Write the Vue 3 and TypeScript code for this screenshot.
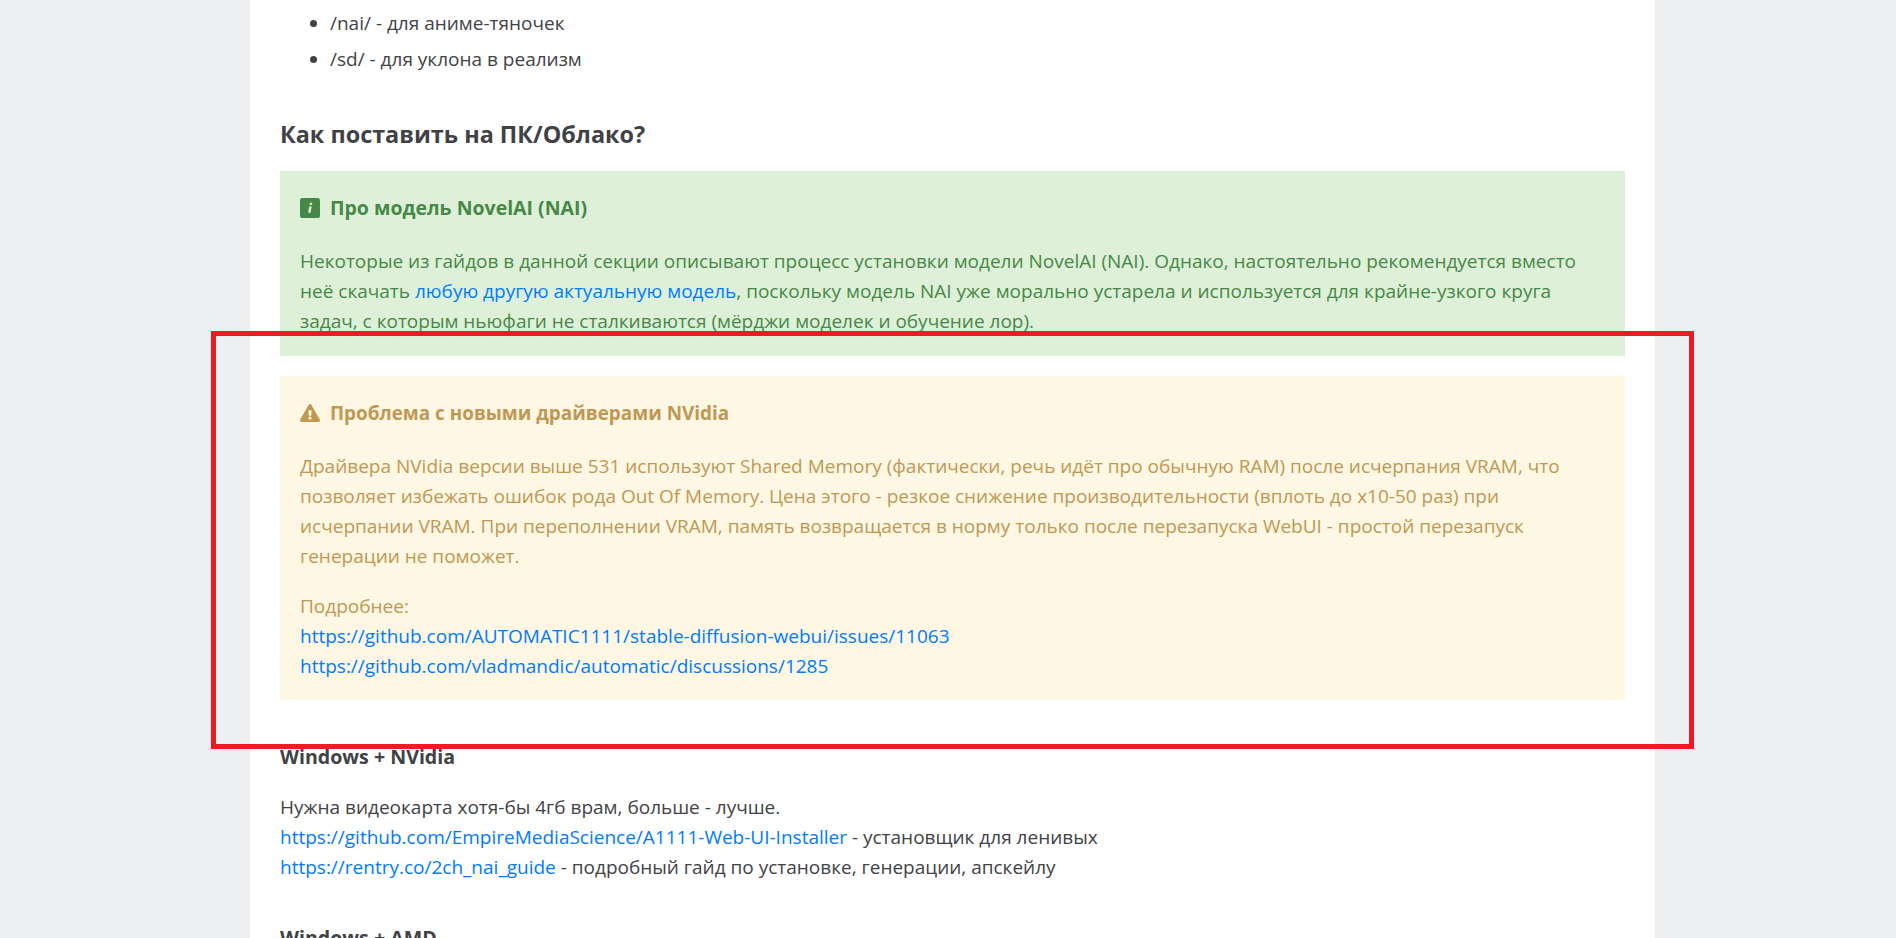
<script setup lang="ts">
interface Link { href: string; text: string }
const issues: Link[] = [
  { href: '#a', text: 'https://github.com/AUTOMATIC1111/stable-diffusion-webui/issues/11063' },
  { href: '#b', text: 'https://github.com/vladmandic/automatic/discussions/1285' },
]
</script>

<template>
  <div class="page">
    <main class="sheet">
      <ul class="list">
        <li>/nai/ - для аниме-тяночек</li>
        <li>/sd/ - для уклона в реализм</li>
      </ul>

      <h2 class="heading">Как поставить на ПК/Облако?</h2>

      <section class="callout success">
        <h4 class="callout-title">
          <svg class="icon" viewBox="0 0 20 20" aria-hidden="true">
            <rect x="0" y="0" width="20" height="20" rx="2.5" fill="#468847" />
            <path d="M9.2 8.6h2.5l-1.1 6.2H8.1zM10 4.8h2.3l-.4 2.2H9.6z" fill="#dff0d8" />
          </svg>
          Про модель NovelAI (NAI)
        </h4>
        <p>Некоторые из гайдов в данной секции описывают процесс установки модели NovelAI (NAI). Однако, настоятельно рекомендуется вместо неё скачать <a href="#c">любую другую актуальную модель</a>, поскольку модель NAI уже морально устарела и используется для крайне-узкого круга задач, с которым ньюфаги не сталкиваются (мёрджи моделек и обучение лор).</p>
      </section>

      <section class="callout warning">
        <h4 class="callout-title">
          <svg class="icon" viewBox="0 0 576 512" aria-hidden="true">
            <path fill="#c09853" d="M569.517 440.013C587.975 472.007 564.806 512 527.94 512H48.054c-36.937 0-59.999-40.055-41.577-71.987L246.423 23.985c18.467-32.009 64.72-31.951 83.154 0l239.94 416.028zM288 354c-25.405 0-46 20.595-46 46s20.595 46 46 46 46-20.595 46-46-20.595-46-46-46zm-43.673-165.346l7.418 136c.347 6.364 5.609 11.346 11.982 11.346h48.546c6.373 0 11.635-4.982 11.982-11.346l7.418-136c.375-6.874-5.098-12.654-11.982-12.654h-63.383c-6.884 0-12.356 5.78-11.981 12.654z" />
          </svg>
          Проблема с новыми драйверами NVidia
        </h4>
        <p>Драйвера NVidia версии выше 531 используют Shared Memory (фактически, речь идёт про обычную RAM) после исчерпания VRAM, что позволяет избежать ошибок рода Out Of Memory. Цена этого - резкое снижение производительности (вплоть до x10-50 раз) при исчерпании VRAM. При переполнении VRAM, память возвращается в норму только после перезапуска WebUI - простой перезапуск генерации не поможет.</p>
        <p class="more">
          Подробнее:
          <a v-for="l in issues" :key="l.href" :href="l.href" class="block">{{ l.text }}</a>
        </p>
      </section>

      <h4 class="sub">Windows + NVidia</h4>
      <p class="plain">
        Нужна видеокарта хотя-бы 4гб врам, больше - лучше.<br />
        <a href="#d">https://github.com/EmpireMediaScience/A1111-Web-UI-Installer</a> - установщик для ленивых<br />
        <a href="#e">https://rentry.co/2ch_nai_guide</a> - подробный гайд по установке, генерации, апскейлу
      </p>

      <h4 class="sub amd">Windows + AMD</h4>
    </main>

    <div class="annotation" aria-hidden="true"></div>
  </div>
</template>

<style>
html, body { margin: 0; height: 938px; overflow: hidden; }
</style>

<style scoped>
.page {
  position: relative;
  height: 938px;
  overflow: hidden;
  background: #eceef0;
  font-family: "Open Sans", "Noto Sans", sans-serif;
  font-size: 19px;
  line-height: 30px;
  color: #404246;
}
.sheet {
  box-sizing: border-box;
  width: 1405px;
  height: 938px;
  margin-left: 250px;
  padding: 0 30px;
  background: #fff;
  overflow: hidden;
}
.list { margin: 0; padding: 8px 0 0 50px; }
.list li { margin-bottom: 6px; }
.heading { margin: 42px 0 0; font-size: 23.4px; line-height: 36px; font-weight: 700; }
.callout { padding: 22px 20px 19px; margin-top: 20px; }
.heading + .callout { margin-top: 19px; }
.callout-title {
  display: flex;
  align-items: center;
  gap: 10px;
  margin: 0 0 23px;
  font-size: 18.9px;
  line-height: 30px;
  font-weight: 700;
}
.success .callout-title { font-size: 19.5px; }
.icon { width: 20px; height: 20px; flex: none; }
.callout p { margin: 0; }
.callout .more { margin-top: 20px; }
.success { background: #dff0d8; color: #468847; padding-bottom: 20px; }
.warning { background: #fdf7e3; color: #c09853; }
a { color: #007bff; text-decoration: none; }
.block { display: block; }
.sub { margin: 42px 0 0; font-size: 19.6px; line-height: 30px; font-weight: 700; }
.plain { margin: 20px 0 0; }
.amd { margin-top: 41px; }
.annotation {
  position: absolute;
  left: 211px;
  top: 331px;
  width: 1483px;
  height: 418px;
  box-sizing: border-box;
  border: 5px solid #ed1c24;
  pointer-events: none;
}
</style>
